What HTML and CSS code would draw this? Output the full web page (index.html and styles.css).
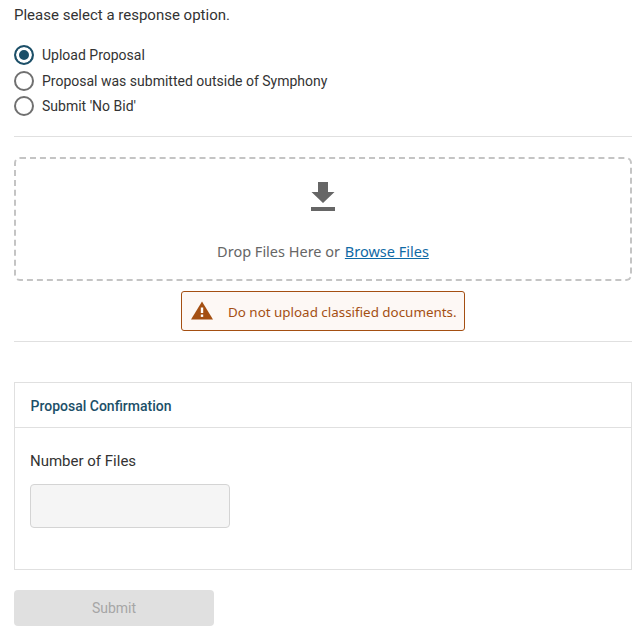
FILE: index.html
```html
<!DOCTYPE html>
<html lang="en">
<head>
    <meta charset="UTF-8">
    <meta name="viewport" content="width=device-width, initial-scale=1.0">
    <title>Response</title>
    <link rel="stylesheet" href="styles.css">
</head>
<body>
    <p class="prompt">Please select a response option.</p>

    <div class="options">
        <label class="option">
            <span class="radio checked"></span>
            Upload Proposal
        </label>
        <label class="option">
            <span class="radio"></span>
            Proposal was submitted outside of Symphony
        </label>
        <label class="option">
            <span class="radio"></span>
            Submit 'No Bid'
        </label>
    </div>

    <div class="divider top"></div>

    <div class="dropzone">
        <svg class="drop-icon" width="24" height="29" viewBox="0 0 24 29">
            <path d="M7 0h10v10h6.500L12 21 0.500 10H7z" fill="#666"/>
            <rect x="0" y="25" width="24" height="4" fill="#666"/>
        </svg>
        <div class="drop-text">Drop Files Here or <a href="#">Browse Files</a></div>
    </div>

    <div class="warning-row">
        <div class="warning">
            <svg width="22" height="19" viewBox="0 0 22 19">
                <path d="M11 0.500L22 18.500H0z" fill="#a44f12"/>
                <rect x="9.800" y="6.500" width="2.400" height="5.500" fill="#fff"/>
                <rect x="9.800" y="13.500" width="2.400" height="2.400" fill="#fff"/>
            </svg>
            <span class="warning-text">Do not upload classified documents.</span>
        </div>
    </div>

    <div class="divider"></div>

    <div class="card">
        <div class="card-header">Proposal Confirmation</div>
        <div class="card-body">
            <div class="field-label">Number of Files</div>
            <input class="field-input" type="text" disabled>
        </div>
    </div>

    <button class="submit-btn" disabled>Submit</button>
</body>
</html>
```

FILE: styles.css
```css
/* Global Styles */
body {
    margin: 0;
    padding: 0 11px 0 14px;
    font-family: Roboto, "Liberation Sans", sans-serif;
    background-color: #FFFFFF;
    color: #333;
}

/* Response options */
.prompt {
    margin: 0;
    padding-top: 6px;
    font-size: 15px;
    line-height: 18px;
}

.options {
    display: flex;
    flex-direction: column;
    margin-top: 18px;
}

.option {
    display: flex;
    align-items: center;
    gap: 8px;
    height: 25.500px;
    font-size: 14px;
}

.option:first-child {
    height: 26px;
}

.radio {
    box-sizing: border-box;
    width: 20px;
    height: 20px;
    border: 2px solid #707070;
    border-radius: 50%;
    background: #FFFFFF;
}

.radio.checked {
    border-color: #1c4f68;
    background: #1c4f68;
    box-shadow: inset 0 0 0 3px #FFFFFF;
}

.divider {
    height: 1px;
    background: #E0E0E0;
}

.divider.top {
    margin-top: 16.500px;
}

/* Dropzone */
.dropzone {
    box-sizing: border-box;
    height: 124px;
    margin-top: 20px;
    padding-top: 23px;
    display: flex;
    flex-direction: column;
    align-items: center;
    border: 2px dashed #C4C4C4;
    border-radius: 6px;
}

.drop-icon {
    flex-shrink: 0;
}

.drop-text {
    margin-top: 30px;
    font-family: "Noto Sans", sans-serif;
    font-size: 14.500px;
    line-height: 20px;
    color: #666;
}

.drop-text a {
    margin-left: 1px;
    color: #0f6aa6;
}

.warning-row {
    display: flex;
    justify-content: center;
    margin: 10px 0;
}

.warning {
    box-sizing: border-box;
    display: flex;
    align-items: center;
    gap: 15px;
    width: 284px;
    height: 40px;
    padding: 0 0 0 9px;
    font-family: "Noto Sans", sans-serif;
    font-size: 13.400px;
    white-space: nowrap;
    color: #a44f12;
    background: #FDF8F5;
    border: 1px solid #a44f12;
    border-radius: 3px;
}

.warning svg {
    flex-shrink: 0;
}

.warning-text {
    padding-top: 2px;
}

/* Confirmation card */
.card {
    margin-top: 40px;
    border: 1px solid #E0E0E0;
}

.card-header {
    height: 44px;
    padding-left: 15.500px;
    line-height: 47px;
    font-size: 14px;
    font-weight: 500;
    color: #1c4f68;
    border-bottom: 1px solid #E0E0E0;
}

.card-body {
    height: 141px;
    padding: 23px 15px 0;
    box-sizing: border-box;
}

.field-label {
    font-size: 15px;
    line-height: 20px;
}

.field-input {
    display: block;
    box-sizing: border-box;
    width: 200px;
    height: 44px;
    margin-top: 13px;
    background: #F5F5F5;
    border: 1px solid #D4D4D4;
    border-radius: 4px;
}

.submit-btn {
    display: block;
    width: 200px;
    height: 36px;
    margin-top: 20px;
    font-family: inherit;
    font-size: 14px;
    color: #A6A6A6;
    background: #E0E0E0;
    border: none;
    border-radius: 4px;
}
```
